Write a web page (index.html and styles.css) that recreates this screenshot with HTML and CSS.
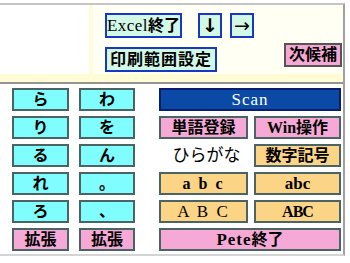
FILE: index.html
```html
<!DOCTYPE html>
<html lang="ja">
<head>
    <meta charset="UTF-8">
    <title>Pete</title>
    <link rel="stylesheet" href="styles.css">
</head>
<body>
    <div class="frame">
        <div class="panel">
            <div class="panel-main">
                <div class="blank"></div>
                <div class="tools">
                    <div class="tool-row">
                        <div class="tool excel"><span class="latin">Excel</span>終了</div>
                        <div class="tool arrow down">↓</div>
                        <div class="tool arrow">→</div>
                    </div>
                    <div class="tool-row second">
                        <div class="tool print">印刷範囲設定</div>
                        <div class="next">次候補</div>
                    </div>
                </div>
            </div>
            <div class="strip"></div>
        </div>
        <div class="keys">
            <div class="kana">
                <div class="key cyan">ら</div>
                <div class="key cyan">わ</div>
                <div class="key cyan">り</div>
                <div class="key cyan">を</div>
                <div class="key cyan">る</div>
                <div class="key cyan">ん</div>
                <div class="key cyan">れ</div>
                <div class="key cyan">。</div>
                <div class="key cyan">ろ</div>
                <div class="key cyan">、</div>
                <div class="key pink">拡張</div>
                <div class="key pink">拡張</div>
            </div>
            <div class="funcs">
                <div class="key scan wide">Scan</div>
                <div class="key pink">単語登録</div>
                <div class="key pink">Win操作</div>
                <div class="label">ひらがな</div>
                <div class="key orange">数字記号</div>
                <div class="key orange spaced">a b c</div>
                <div class="key orange big">abc</div>
                <div class="key orange spaced plain">A B C</div>
                <div class="key orange narrow">ABC</div>
                <div class="key pink wide"><span class="pete">Pete</span>終了</div>
            </div>
        </div>
    </div>
</body>
</html>
```
FILE: styles.css
```css
body {
    margin: 0;
    background: #fff;
    font-family: "Liberation Serif", "Noto Sans CJK JP", serif;
    font-size: 16px;
    color: #000;
}
.frame {
    margin-top: 3px;
    width: 343px;
    border-top: 2px solid #c4c4c4;
    border-right: 2px solid #a0a0a0;
    border-bottom: 2px solid #d4d4d4;
    box-shadow: 0 2px 0 #8a8a8a;
}
.panel {
    border-bottom: 2px solid #949494;
}
.panel-main {
    display: flex;
    height: 69px;
}
.blank {
    width: 89px;
}
.tools {
    flex: 1;
    background: #fffff3;
    border-left: 4px solid #fffbdc;
    padding: 8px 1px 0 12px;
}
.tool-row {
    display: flex;
    align-items: flex-start;
}
.tool-row.second {
    margin-top: 5px;
}
.tool {
    display: flex;
    align-items: center;
    justify-content: center;
    height: 25px;
    box-sizing: border-box;
    border: 2px solid #1838c4;
    background: #d2f8e6;
    line-height: 1;
    font-weight: bold;
    white-space: nowrap;
}
.latin {
    font-weight: normal;
    font-size: 17px;
    letter-spacing: 0.5px;
}
.excel {
    width: 77px;
}
.arrow {
    width: 24px;
    margin-left: 8px;
    font-family: "DejaVu Sans", sans-serif;
    font-weight: normal;
    font-size: 19px;
}
.arrow.down {
    margin-left: 16px;
    font-weight: bold;
}
.print {
    width: 112px;
    margin-top: 4px;
    letter-spacing: 1px;
}
.next {
    margin-left: auto;
    width: 58px;
    height: 24px;
    box-sizing: border-box;
    border: 2px solid #555;
    background: #f5a8d4;
    display: flex;
    align-items: center;
    justify-content: center;
    font-weight: bold;
    line-height: 1;
}
.strip {
    height: 8px;
    background: #fffbd4;
}
.keys {
    display: flex;
    padding: 4px 0 3px 12px;
}
.kana, .funcs {
    display: grid;
    grid-auto-rows: 23px;
    row-gap: 5px;
}
.kana {
    grid-template-columns: 57px 56px;
    column-gap: 10px;
}
.funcs {
    grid-template-columns: 89px 87px;
    column-gap: 6px;
    margin-left: 24px;
}
.key {
    display: flex;
    align-items: center;
    justify-content: center;
    box-sizing: border-box;
    border: 2px solid #4a6464;
    font-weight: bold;
    line-height: 1;
    white-space: nowrap;
}
.cyan {
    background: #80fdfe;
}
.pink {
    background: #f6a9d6;
}
.orange {
    background: #fcd486;
}
.wide {
    grid-column: span 2;
}
.scan {
    background: #0a4aa6;
    border-color: #0a1e6a;
    color: #fff;
    font-weight: normal;
    font-size: 17px;
    letter-spacing: 1px;
}
.label {
    display: flex;
    align-items: center;
    justify-content: center;
    padding-left: 6px;
    line-height: 1;
    font-size: 17px;
}
.spaced {
    letter-spacing: 2px;
}
.plain {
    font-weight: normal;
    font-size: 17px;
}
.big {
    font-size: 17px;
}
.pete {
    font-size: 17px;
    letter-spacing: 1px;
}
.narrow {
    letter-spacing: -1px;
}
```
